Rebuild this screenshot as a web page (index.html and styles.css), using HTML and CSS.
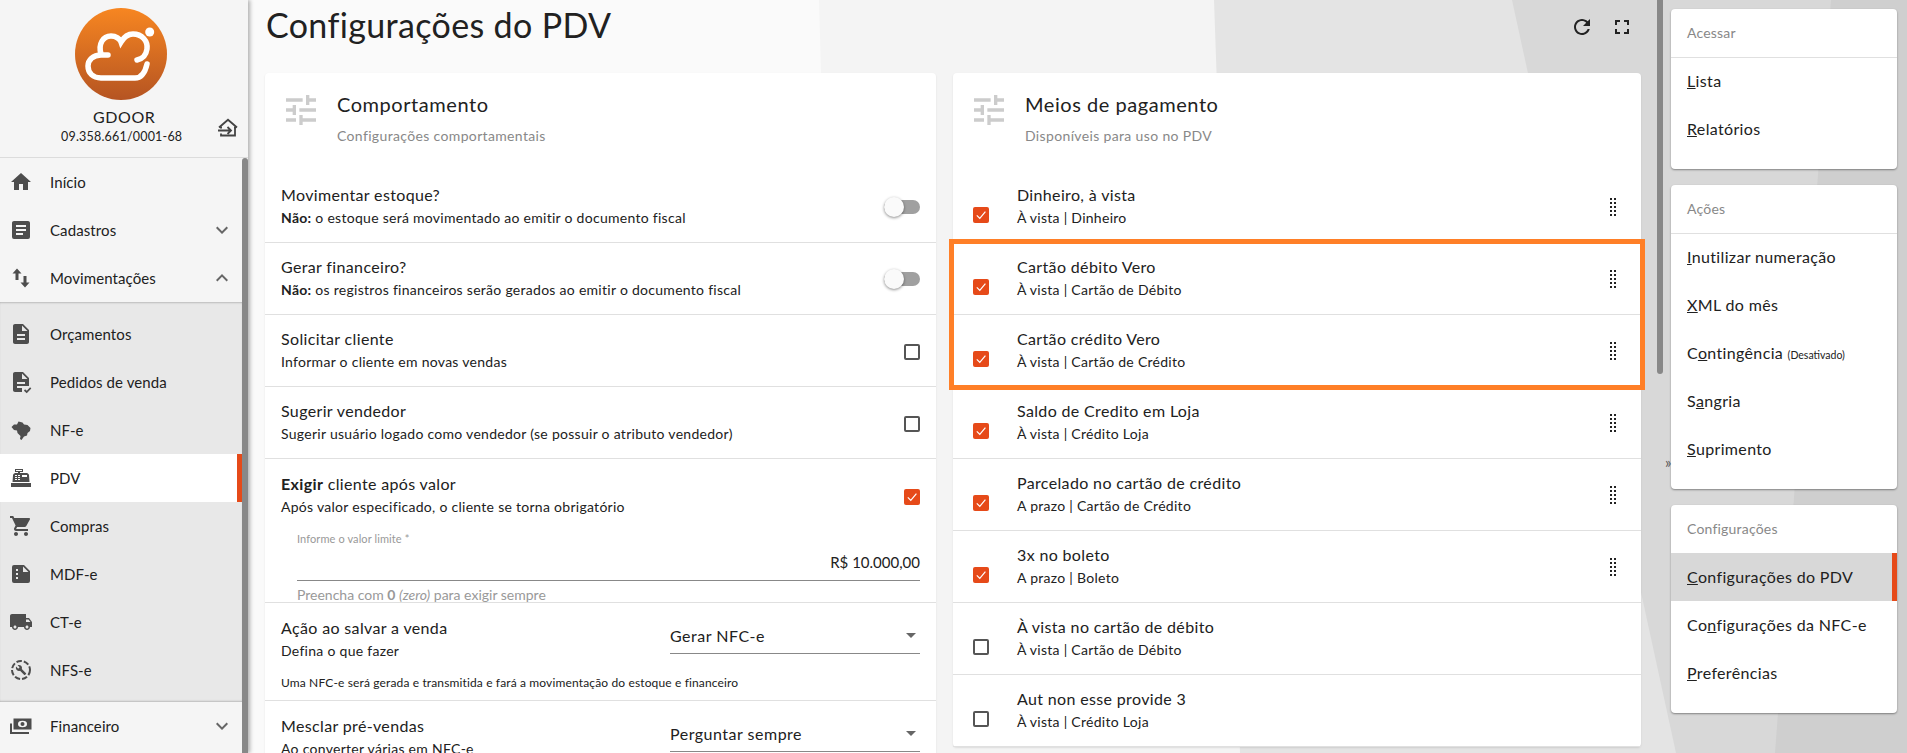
FILE: index.html
```html
<!DOCTYPE html>
<html lang="pt-BR">
<head>
  <meta charset="UTF-8" />
  <title>Configurações do PDV</title>
  <link rel="stylesheet" href="styles.css">
</head>
<body>
  <!-- background shapes -->
  <svg class="bg-shapes" width="1907" height="753" viewBox="0 0 1907 753">
    <rect width="1907" height="753" fill="#fafafa"/>
    <polygon points="819,0 1907,0 1907,753 840,753" fill="#f4f4f4"/>
    <polygon points="1214,0 1907,0 1907,753 1240,753" fill="#e4e4e4"/>
    <polygon points="1512,0 1907,0 1907,753 1676,753" fill="#d8d8d8"/>
    <polygon points="1831,0 1907,0 1907,753 1775,753" fill="#cfcfcf"/>
  </svg>

  <div class="app">
    <nav class="sidebar">
      <div class="company">
        <svg class="logo" width="92" height="92" viewBox="0 0 92 92">
          <defs>
            <linearGradient id="logoFill" x1="0" y1="0" x2="0" y2="1">
              <stop offset="0" stop-color="#f78621"/>
              <stop offset="1" stop-color="#b55422"/>
            </linearGradient>
          </defs>
          <circle cx="46" cy="46" r="46" fill="url(#logoFill)"/>
          <g fill="none" stroke="#fff" stroke-width="5.5" stroke-linecap="round">
            <path d="M72 56C70 65 66 70 60 70H26C18 70 13 65 13 58C13 52 18 47 26 47H33"/>
            <path d="M26 46C23 36 28 28 36 28C41 28 45 31 46 34C49 29 53 26 58 26C67 26 73 33 72 41C71 48 67 51 62 52"/>
          </g>
          <circle cx="74.7" cy="24" r="4.5" fill="#fff"/>
        </svg>
        <div class="company-name">GDOOR</div>
        <div class="company-doc">09.358.661/0001-68</div>
        <svg class="company-switch" width="22" height="20" viewBox="0 0 22 20" fill="none" stroke="#444" stroke-width="1.8">
          <path d="M2 9.5L11 1.8L20 9.5"/>
          <path d="M3 9.5H5M17 9.5H19"/>
          <path d="M18 9.5V17.5H4V15.5"/>
          <path d="M1 12.5H14M10.5 9L14 12.5L10.5 16"/>
        </svg>
      </div>

      <div class="menu-wrap">
        <div class="menu">
          <a class="menu-item">
            <svg class="menu-icon" viewBox="0 0 24 24"><path d="M10 20v-6h4v6h5v-8h3L12 3 2 12h3v8z"/></svg>
            <span>Início</span>
          </a>
          <a class="menu-item">
            <svg class="menu-icon" viewBox="0 0 24 24"><path d="M14,17H7V15H14M17,13H7V11H17M17,9H7V7H17M19,3H5C3.89,3 3,3.89 3,5V19A2,2 0 0,0 5,21H19A2,2 0 0,0 21,19V5C21,3.89 20.1,3 19,3Z"/></svg>
            <span>Cadastros</span>
            <svg class="menu-chevron" viewBox="0 0 24 24"><path d="M16.59 8.59L12 13.17 7.41 8.59 6 10l6 6 6-6z"/></svg>
          </a>
          <a class="menu-item">
            <svg class="menu-icon" viewBox="0 0 24 24"><path d="M8 2.5L3.5 7.5H6.5V14H9.5V7.5H12.5ZM16 21.5L20.5 16.5H17.5V10H14.5V16.5H11.5Z"/></svg>
            <span>Movimentações</span>
            <svg class="menu-chevron" viewBox="0 0 24 24"><path d="M12 8l-6 6 1.41 1.41L12 10.83l4.59 4.58L18 14z"/></svg>
          </a>

          <div class="submenu">
            <a class="menu-item">
              <svg class="menu-icon" viewBox="0 0 24 24"><path d="M14 2H6c-1.1 0-1.99.9-1.99 2L4 20c0 1.1.89 2 1.99 2H18c1.1 0 2-.9 2-2V8l-6-6zm2 16H8v-2h8v2zm0-4H8v-2h8v2zm-3-5V3.5L18.5 9H13z"/></svg>
              <span>Orçamentos</span>
            </a>
            <a class="menu-item">
              <svg class="menu-icon" viewBox="0 0 24 24">
                <path d="M14 2H6c-1.1 0-1.99.9-1.99 2L4 20c0 1.1.89 2 1.99 2H18c1.1 0 2-.9 2-2V8l-6-6zm2 16H8v-2h8v2zm0-4H8v-2h8v2zm-3-5V3.5L18.5 9H13z"/>
                <rect x="13" y="16" width="11" height="8" fill="#e8e8e8"/>
                <path d="M15.5 20l2.2 2 4-4.2" fill="none" stroke="#4d4d4d" stroke-width="1.7"/>
              </svg>
              <span>Pedidos de venda</span>
            </a>
            <a class="menu-item">
              <svg class="menu-icon" viewBox="0 0 24 24"><path d="M2.5 9L5 6.5H8L9.5 3.5L13.5 4.5L15 6.5L18.5 7L21.5 10L21 13L18.5 15L18 17.5L15 18.5L12.5 22L11 21L11.5 18L8.5 15L8 12.5L5 12Z"/></svg>
              <span>NF-e</span>
            </a>
            <a class="menu-item is-active">
              <svg class="menu-icon" viewBox="0 0 24 24"><path fill-rule="evenodd" d="M2,17H22V21H2V17M6.25,7H9V6H6V3H14V6H11V7H17.8C18.8,7 19.8,8 20,9L20.5,16H3.5L4.05,9C4.25,8 5.25,7 6.25,7M13,9V11H18V9H13M6,9V10H8V9H6M9,9V10H11V9H9M6,11V12H8V11H6M9,11V12H11V11H9M6,13V14H8V13H6M9,13V14H11V13H9M7,4V5H13V4H7Z"/></svg>
              <span>PDV</span>
            </a>
            <a class="menu-item">
              <svg class="menu-icon" viewBox="0 0 24 24"><path d="M7 18c-1.1 0-1.99.9-1.99 2S5.9 22 7 22s2-.9 2-2-.9-2-2-2zM1 2v2h2l3.6 7.59-1.35 2.45c-.16.28-.25.61-.25.96 0 1.1.9 2 2 2h12v-2H7.42c-.14 0-.25-.11-.25-.25l.03-.12.9-1.63h7.45c.75 0 1.41-.41 1.75-1.03l3.58-6.49c.08-.14.12-.31.12-.48 0-.55-.45-1-1-1H5.21l-.94-2H1zm16 16c-1.1 0-1.99.9-1.99 2s.89 2 1.99 2 2-.9 2-2-.9-2-2-2z"/></svg>
              <span>Compras</span>
            </a>
            <a class="menu-item">
              <svg class="menu-icon" viewBox="0 0 24 24"><path fill-rule="evenodd" d="M5 3H15L21 9V19A2 2 0 0 1 19 21H5A2 2 0 0 1 3 19V5A2 2 0 0 1 5 3ZM14 4.5V10H19.5ZM7 7V9H9V7ZM7 11V13H9V11ZM7 15V17H9V15Z"/></svg>
              <span>MDF-e</span>
            </a>
            <a class="menu-item">
              <svg class="menu-icon" viewBox="0 0 24 24"><path d="M20 8h-3V4H3c-1.1 0-2 .9-2 2v11h2c0 1.66 1.34 3 3 3s3-1.34 3-3h6c0 1.66 1.34 3 3 3s3-1.34 3-3h2v-5l-3-4zM6 18.5c-.83 0-1.5-.67-1.5-1.5s.67-1.5 1.5-1.5 1.5.67 1.5 1.5-.67 1.5-1.5 1.5zm13.5-9l1.96 2.5H17V9.5h2.5zm-1.5 9c-.83 0-1.5-.67-1.5-1.5s.67-1.5 1.5-1.5 1.5.67 1.5 1.5-.67 1.5-1.5 1.5z"/></svg>
              <span>CT-e</span>
            </a>
            <a class="menu-item">
              <svg class="menu-icon" viewBox="0 0 24 24">
                <circle cx="12" cy="12" r="9" fill="none" stroke="#4d4d4d" stroke-width="2" stroke-dasharray="5.5 2"/>
                <path transform="translate(6.4 6.4) scale(.47)" d="M22.7 19l-9.1-9.1c.9-2.3.4-5-1.5-6.9-2-2-5-2.4-7.4-1.3L9 6 6 9 1.6 4.7C.4 7.1.9 10.1 2.9 12.1c1.9 1.9 4.6 2.4 6.9 1.5l9.1 9.1c.4.4 1 .4 1.4 0l2.3-2.3c.5-.4.5-1.1.1-1.4z"/>
              </svg>
              <span>NFS-e</span>
            </a>
          </div>

          <a class="menu-item">
            <svg class="menu-icon" viewBox="0 0 24 24">
              <rect x="4.5" y="4.5" width="18" height="11"/>
              <ellipse cx="13.5" cy="10" rx="4.5" ry="3.2" fill="#f5f5f5"/>
              <circle cx="13.5" cy="10" r="2"/>
              <path d="M1 9.5H3V18H20V20H1Z"/>
            </svg>
            <span>Financeiro</span>
            <svg class="menu-chevron" viewBox="0 0 24 24"><path d="M16.59 8.59L12 13.17 7.41 8.59 6 10l6 6 6-6z"/></svg>
          </a>
        </div>
        <div class="scroll-thumb"></div>
      </div>
    </nav>

    <main class="content">
      <header class="page-head">
        <h1>Configurações do PDV</h1>
        <div class="page-actions">
          <svg width="24" height="24" viewBox="0 0 24 24"><path d="M17.65 6.35C16.2 4.9 14.21 4 12 4c-4.42 0-7.99 3.58-7.99 8s3.57 8 7.99 8c3.73 0 6.84-2.55 7.73-6h-2.08c-.82 2.33-3.04 4-5.65 4-3.31 0-6-2.69-6-6s2.69-6 6-6c1.66 0 3.14.69 4.22 1.78L13 11h7V4l-2.35 2.35z"/></svg>
          <svg width="24" height="24" viewBox="0 0 24 24"><path d="M7 14H5v5h5v-2H7v-3zm-2-4h2V7h3V5H5v5zm12 7h-3v2h5v-5h-2v3zM14 5v2h3v3h2V5h-5z"/></svg>
        </div>
      </header>

      <div class="columns">
        <section class="card">
          <div class="card-head">
            <svg class="tune" width="40" height="40" viewBox="0 0 24 24"><path d="M3,17V19H9V17H3M3,5V7H13V5H3M13,21V19H21V17H13V15H11V21H13M7,9V11H3V13H7V15H9V9H7M21,13V11H11V13H21M15,9H17V7H21V5H17V3H15V9Z"/></svg>
            <div>
              <h2>Comportamento</h2>
              <p>Configurações comportamentais</p>
            </div>
          </div>

          <div class="row">
            <div class="row-text">
              <div class="row-title">Movimentar estoque?</div>
              <div class="row-sub"><b>Não:</b> o estoque será movimentado ao emitir o documento fiscal</div>
            </div>
            <span class="switch"></span>
          </div>
          <div class="row">
            <div class="row-text">
              <div class="row-title">Gerar financeiro?</div>
              <div class="row-sub"><b>Não:</b> os registros financeiros serão gerados ao emitir o documento fiscal</div>
            </div>
            <span class="switch"></span>
          </div>
          <div class="row">
            <div class="row-text">
              <div class="row-title">Solicitar cliente</div>
              <div class="row-sub">Informar o cliente em novas vendas</div>
            </div>
            <span class="check"></span>
          </div>
          <div class="row">
            <div class="row-text">
              <div class="row-title">Sugerir vendedor</div>
              <div class="row-sub">Sugerir usuário logado como vendedor (se possuir o atributo vendedor)</div>
            </div>
            <span class="check"></span>
          </div>
          <div class="row row-tall">
            <div class="row-line">
              <div class="row-text">
                <div class="row-title"><b>Exigir</b> cliente após valor</div>
                <div class="row-sub">Após valor especificado, o cliente se torna obrigatório</div>
              </div>
              <span class="check is-on"><svg viewBox="0 0 16 16"><path d="M3.8 8.4L6.8 11.4L12.4 4.6"/></svg></span>
            </div>
            <div class="field">
              <label>Informe o valor limite *</label>
              <div class="field-value">R$ 10.000,00</div>
              <div class="field-hint">Preencha com <b>0</b> <i>(zero)</i> para exigir sempre</div>
            </div>
          </div>
          <div class="row row-select">
            <div class="row-line">
              <div class="row-text">
                <div class="row-title">Ação ao salvar a venda</div>
                <div class="row-sub">Defina o que fazer</div>
              </div>
              <div class="select">Gerar NFC-e</div>
            </div>
            <div class="row-note">Uma NFC-e será gerada e transmitida e fará a movimentação do estoque e financeiro</div>
          </div>
          <div class="row row-select">
            <div class="row-line">
              <div class="row-text">
                <div class="row-title">Mesclar pré-vendas</div>
                <div class="row-sub">Ao converter várias em NFC-e</div>
              </div>
              <div class="select">Perguntar sempre</div>
            </div>
          </div>
        </section>

        <section class="card">
          <div class="card-head">
            <svg class="tune" width="40" height="40" viewBox="0 0 24 24"><path d="M3,17V19H9V17H3M3,5V7H13V5H3M13,21V19H21V17H13V15H11V21H13M7,9V11H3V13H7V15H9V9H7M21,13V11H11V13H21M15,9H17V7H21V5H17V3H15V9Z"/></svg>
            <div>
              <h2>Meios de pagamento</h2>
              <p>Disponíveis para uso no PDV</p>
            </div>
          </div>

          <div class="pay">
            <span class="check is-on"><svg viewBox="0 0 16 16"><path d="M3.8 8.4L6.8 11.4L12.4 4.6"/></svg></span>
            <div class="row-text">
              <div class="row-title">Dinheiro, à vista</div>
              <div class="row-sub">À vista | Dinheiro</div>
            </div>
            <span class="drag"></span>
          </div>

          <div class="highlight">
            <div class="pay">
              <span class="check is-on"><svg viewBox="0 0 16 16"><path d="M3.8 8.4L6.8 11.4L12.4 4.6"/></svg></span>
              <div class="row-text">
                <div class="row-title">Cartão débito Vero</div>
                <div class="row-sub">À vista | Cartão de Débito</div>
              </div>
              <span class="drag"></span>
            </div>
            <div class="pay">
              <span class="check is-on"><svg viewBox="0 0 16 16"><path d="M3.8 8.4L6.8 11.4L12.4 4.6"/></svg></span>
              <div class="row-text">
                <div class="row-title">Cartão crédito Vero</div>
                <div class="row-sub">À vista | Cartão de Crédito</div>
              </div>
              <span class="drag"></span>
            </div>
          </div>

          <div class="pay">
            <span class="check is-on"><svg viewBox="0 0 16 16"><path d="M3.8 8.4L6.8 11.4L12.4 4.6"/></svg></span>
            <div class="row-text">
              <div class="row-title">Saldo de Credito em Loja</div>
              <div class="row-sub">À vista | Crédito Loja</div>
            </div>
            <span class="drag"></span>
          </div>
          <div class="pay">
            <span class="check is-on"><svg viewBox="0 0 16 16"><path d="M3.8 8.4L6.8 11.4L12.4 4.6"/></svg></span>
            <div class="row-text">
              <div class="row-title">Parcelado no cartão de crédito</div>
              <div class="row-sub">A prazo | Cartão de Crédito</div>
            </div>
            <span class="drag"></span>
          </div>
          <div class="pay">
            <span class="check is-on"><svg viewBox="0 0 16 16"><path d="M3.8 8.4L6.8 11.4L12.4 4.6"/></svg></span>
            <div class="row-text">
              <div class="row-title">3x no boleto</div>
              <div class="row-sub">A prazo | Boleto</div>
            </div>
            <span class="drag"></span>
          </div>
          <div class="pay">
            <span class="check"></span>
            <div class="row-text">
              <div class="row-title">À vista no cartão de débito</div>
              <div class="row-sub">À vista | Cartão de Débito</div>
            </div>
          </div>
          <div class="pay">
            <span class="check"></span>
            <div class="row-text">
              <div class="row-title">Aut non esse provide 3</div>
              <div class="row-sub">À vista | Crédito Loja</div>
            </div>
          </div>
        </section>
      </div>
    </main>

    <div class="gutter">
      <div class="gutter-thumb"></div>
      <span class="gutter-toggle">»</span>
    </div>

    <aside class="shortcuts">
      <div class="panel">
        <div class="panel-head has-line">Acessar</div>
        <a class="panel-link"><u>L</u>ista</a>
        <a class="panel-link"><u>R</u>elatórios</a>
      </div>
      <div class="panel">
        <div class="panel-head has-line">Ações</div>
        <a class="panel-link"><u>I</u>nutilizar numeração</a>
        <a class="panel-link"><u>X</u>ML do mês</a>
        <a class="panel-link">C<u>o</u>ntingência <small>(Desativado)</small></a>
        <a class="panel-link">S<u>a</u>ngria</a>
        <a class="panel-link"><u>S</u>uprimento</a>
      </div>
      <div class="panel">
        <div class="panel-head">Configurações</div>
        <a class="panel-link is-active"><u>C</u>onfigurações do PDV</a>
        <a class="panel-link">Co<u>n</u>figurações da NFC-e</a>
        <a class="panel-link"><u>P</u>referências</a>
      </div>
    </aside>
  </div>
</body>
</html>
```

FILE: styles.css
```css
* { box-sizing: border-box; }
html, body { height: 100%; }
body { margin: 0; overflow: hidden; font-family: "Lato", "Open Sans", sans-serif; font-size: 16px; color: #212121; background: #fafafa; }
a { color: inherit; text-decoration: none; }

.bg-shapes { position: absolute; top: 0; left: 0; }
.app { position: relative; display: flex; height: 753px; }

/* sidebar */
.sidebar { width: 248px; flex: none; display: flex; flex-direction: column; background: #f5f5f5; box-shadow: 2px 0 4px rgba(0,0,0,.3); }
.company { position: relative; height: 158px; padding-top: 8px; border-bottom: 1px solid #dcdcdc; text-align: center; }
.logo { display: block; margin: 0 auto 7px 75px; }
.company-name { font-size: 16px; line-height: 20px; letter-spacing: .6px; text-align: left; padding-left: 93px; }
.company-doc { font-size: 12.5px; line-height: 20px; letter-spacing: .2px; text-align: left; padding-left: 61px; }
.company-switch { position: absolute; left: 217px; top: 118px; }

.menu-wrap { flex: 1; display: flex; min-height: 0; }
.menu { width: 242px; flex: none; }
.scroll-thumb { width: 6px; background: #888; border-radius: 3px 3px 0 0; }
.menu-item { display: flex; align-items: center; height: 48px; padding-left: 9px; position: relative; font-size: 15px; }
.menu-item span { margin-left: 17px; letter-spacing: .1px; }
.menu-icon { width: 24px; height: 24px; flex: none; fill: #4d4d4d; }
.menu-chevron { width: 24px; height: 24px; position: absolute; left: 210px; top: 12px; fill: #666; }
.submenu { background: #e8e8e8; padding: 8px 0; box-shadow: inset 0 2px 2px -1px rgba(0,0,0,.2), inset 0 -2px 2px -1px rgba(0,0,0,.2); }
.menu-item.is-active { background: #fff; border-right: 5px solid #e64a19; }

/* main column */
.content { width: 1409px; flex: none; height: 753px; overflow: hidden; padding-left: 17px; padding-right: 16px; }
.page-head { display: flex; justify-content: space-between; height: 73px; padding-left: 1px; }
h1 { margin: 0; font-size: 34px; line-height: 49px; font-weight: 400; letter-spacing: .35px; }
.page-actions { display: flex; gap: 16px; padding-top: 15px; margin-right: 7px; }
.page-actions svg { fill: #222; }

.columns { display: grid; grid-template-columns: 671px 688px; gap: 17px; align-items: start; }
.card { background: #fff; border-radius: 4px; box-shadow: 0 1px 2px rgba(0,0,0,.1); }
.card-head { display: flex; gap: 16px; height: 98px; padding: 16px 0 0 16px; }
.card-head h2 { margin: 0; font-size: 20px; line-height: 30px; font-weight: 400; letter-spacing: .55px; }
.card-head p { margin: 7px 0 0; font-size: 14px; line-height: 20px; color: #888; letter-spacing: .35px; }
.tune { fill: #ccc; flex: none; margin-top: 1px; }

.row { display: flex; align-items: center; justify-content: space-between; height: 72px; padding: 0 16px; border-bottom: 1px solid #e0e0e0; }
.row-text { min-width: 0; padding-bottom: 1px; }
.row-title { font-size: 16px; line-height: 22px; letter-spacing: .35px; margin-bottom: 1px; }
.row-sub { font-size: 14px; line-height: 22px; letter-spacing: .28px; }
.row-title b, .row-sub b { font-weight: 700; }

.switch { position: relative; display: block; width: 36px; height: 14px; border-radius: 7px; background: #a0a0a0; }
.switch::before { content: ""; position: absolute; left: 0; top: -3px; width: 20px; height: 20px; border-radius: 50%; background: #fafafa; box-shadow: 0 1px 3px rgba(0,0,0,.45); }

.check { display: block; flex: none; width: 16px; height: 16px; margin-top: 2px; border: 2px solid #555; border-radius: 2px; }
.check.is-on { background: #e64a19; border: none; }
.check svg { display: block; width: 16px; height: 16px; fill: none; stroke: #fff; stroke-width: 1.2; }

.row-tall { display: block; height: 144px; padding-top: 14px; overflow: hidden; }
.row-line { display: flex; align-items: center; justify-content: space-between; }
.field { margin: 11px 0 0 16px; }
.field label { display: block; font-size: 11px; line-height: 18px; color: #999; letter-spacing: .1px; }
.field-value { text-align: right; line-height: 24px; padding-top: 2px; height: 33px; border-bottom: 1px solid #888; font-size: 15px; }
.field-hint { font-size: 14px; line-height: 14px; color: #999; margin-top: 7px; }
.field-hint b { font-weight: 700; }

.row-select { display: block; height: 98px; padding-top: 14px; }
.row-select .row-line { align-items: flex-start; }
.select { position: relative; width: 250px; flex: none; height: 37px; padding-top: 8px; border-bottom: 1px solid #888; font-size: 16px; line-height: 22px; letter-spacing: .5px; }
.select::after { content: ""; position: absolute; right: 4px; top: 16px; border: 5px solid transparent; border-top-color: #666; border-bottom: none; }
.row-note { font-size: 12px; line-height: 18px; margin-top: 11px; letter-spacing: .14px; }

.pay { display: flex; align-items: center; height: 72px; padding: 0 25px 0 20px; border-bottom: 1px solid #e0e0e0; position: relative; }
.pay .check { margin: 16px 28px 0 0; }
.pay .row-text { flex: 1; }
.drag { width: 8px; height: 18px; background-image: conic-gradient(#222 25%, transparent 0); background-size: 4px 4px; }
.highlight { position: relative; }
.highlight::after { content: ""; position: absolute; top: -4px; bottom: -3px; left: -4px; right: -4px; border: 5px solid #ff7f27; pointer-events: none; }

/* right rail */
.gutter { position: relative; width: 14px; flex: none; }
.gutter-thumb { width: 6px; height: 374px; background: #888; border-radius: 0 0 3px 3px; }
.gutter-toggle { position: absolute; left: 8px; top: 452px; font-size: 15px; line-height: 20px; color: #555; }

.shortcuts { width: 226px; flex: none; padding-top: 9px; display: flex; flex-direction: column; gap: 16px; }
.panel { background: #fff; border-radius: 4px; padding-bottom: 16px; box-shadow: 0 1px 2px rgba(0,0,0,.4); }
.panel-head { height: 48px; padding: 0 16px; line-height: 48px; font-size: 14px; color: #888; letter-spacing: .2px; }
.panel-head.has-line { height: 49px; border-bottom: 1px solid #e0e0e0; margin-bottom: -1px; }
.panel-link { display: block; height: 48px; line-height: 48px; padding: 0 16px; letter-spacing: .35px; }
.panel-link small { font-size: 10.5px; letter-spacing: 0; }
.panel-link.is-active { background: #d8d8d8; border-right: 5px solid #e64a19; }
```
